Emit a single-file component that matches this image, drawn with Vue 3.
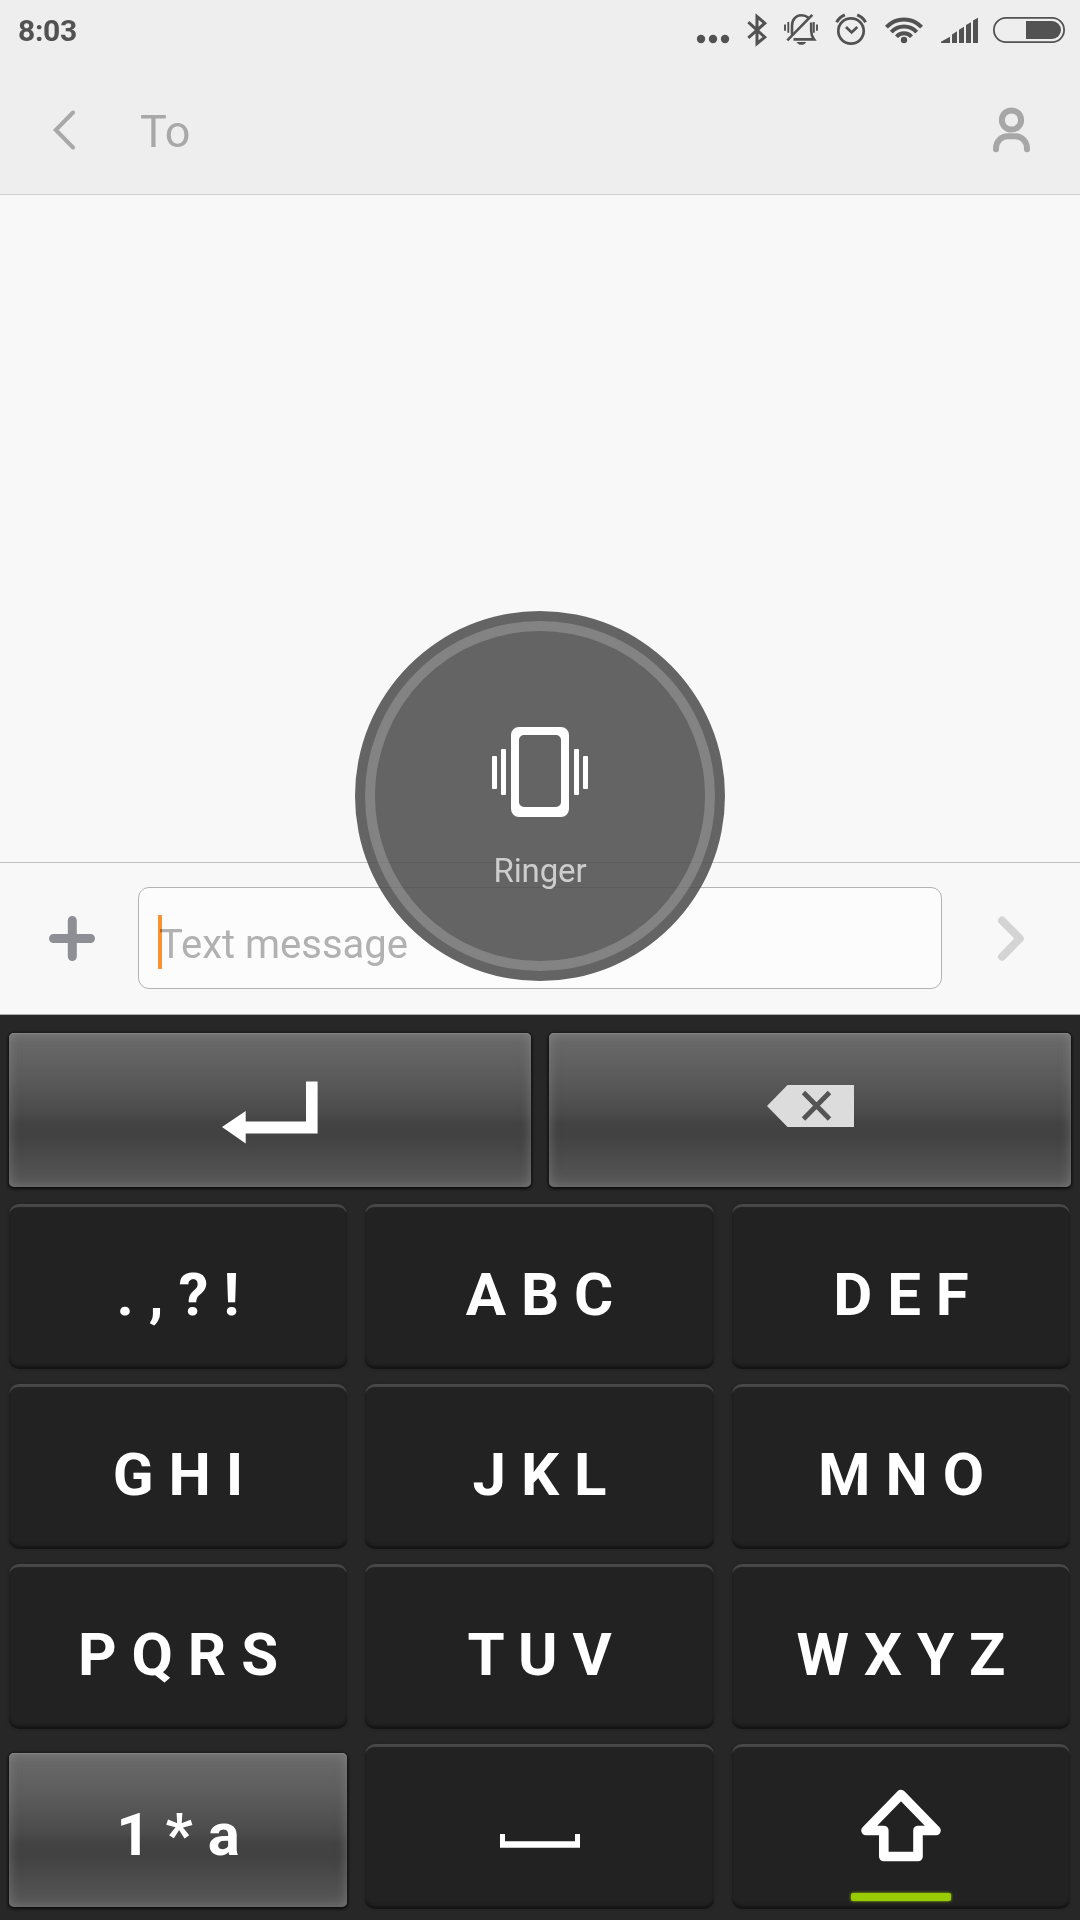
<template>
  <div class="screen">
    <!-- Status bar -->
    <div class="status-bar">
      <span class="clock">8:03</span>
      <svg class="status-icons" width="400" height="60" viewBox="680 0 400 60" fill="none" stroke="#525252">
        <!-- more -->
        <g fill="#525252" stroke="none">
          <circle cx="701" cy="39" r="4.2" />
          <circle cx="713" cy="39" r="4.2" />
          <circle cx="725" cy="39" r="4.2" />
        </g>
        <!-- bluetooth -->
        <path d="M748.3 22.2L764.8 37.2L757 43.5V16.5L764.8 23.2L748.3 37.8" stroke-width="3" />
        <!-- muted bell -->
        <g stroke-width="2.6">
          <path d="M792 34.5V26C792 19.5 796 15.3 801.5 15.3C804.2 15.3 806.6 16.2 808.4 17.8" />
          <path d="M811.2 22.5V31C811.2 35 812.3 37.2 814 39.4H793.5" />
          <path d="M787.3 40.4L812.3 14.8" />
        </g>
        <path d="M796.5 42H806.3C805 44 803.5 44.8 801.4 44.8C799.3 44.8 797.8 44 796.5 42Z" fill="#525252" stroke="none" />
        <path d="M785 24.5V30.7M817 24.5V30.7" stroke-width="1.9" />
        <path d="M788.3 22V32.7M813.8 22V32.7" stroke-width="1.9" />
        <!-- alarm -->
        <circle cx="851" cy="31" r="12.7" stroke-width="2.7" />
        <path d="M846 27L851.6 32.4L857.3 27" stroke-width="2.7" />
        <path d="M836.6 22.2Q839.2 17.3 844.8 14.8M865.6 22.2Q863 17.3 857.2 14.8" stroke-width="3" />
        <!-- wifi -->
        <g stroke-width="4">
          <path d="M886.4 27.2A24 24 0 0 1 921.6 27.2" />
          <path d="M891.3 32.2A17.2 17.2 0 0 1 916.7 32.2" />
          <path d="M896.5 36.7A10 10 0 0 1 911.5 36.7" />
        </g>
        <circle cx="904" cy="40" r="3.2" fill="#525252" stroke="none" />
        <!-- signal -->
        <g fill="#525252" stroke="none">
          <path d="M941 43V41.7L950 36.8V43Z" />
          <path d="M952 43V34.6L957 31.3V43Z" />
          <path d="M959 43V29.8L964 26.7V43Z" />
          <path d="M966 43V25L971 22.3V43Z" />
          <path d="M973 43V20.5L978 17.7V43Z" />
        </g>
        <!-- battery -->
        <rect x="993.9" y="17.9" width="70.2" height="24.2" rx="12.1" stroke-width="1.8" />
        <path d="M1026 21H1052A9 9 0 0 1 1052 39H1026Z" fill="#525252" stroke="none" />
      </svg>
    </div>

    <!-- Recipient -->
    <div class="header">
      <svg class="back" width="24" height="40" viewBox="0 0 24 40">
        <path d="M21 2.5L3.8 20L21 37.5" fill="none" stroke="#a8a8a8" stroke-width="4" stroke-linecap="round" />
      </svg>
      <span class="to">To</span>
      <svg width="40" height="48" viewBox="0 0 40 48" fill="none" stroke="#a7a7a7" stroke-width="6">
        <circle cx="20.5" cy="14" r="9.6" />
        <path d="M5 43.2V42.5C5 35 10.5 30.3 17 30.3H24C30.5 30.3 36 35 36 42.5V43.2" stroke-linecap="round" />
      </svg>
    </div>

    <div class="conversation"></div>

    <!-- Message field -->
    <div class="composer">
      <svg class="plus" width="46" height="46" viewBox="0 0 46 46">
        <path d="M4.5 22.5H41.5M23.3 4.5V40.5" stroke="#8e8f94" stroke-width="9" stroke-linecap="round" />
      </svg>
      <div class="field">
        <span class="placeholder">Text message</span>
        <span class="caret"></span>
      </div>
      <svg class="send" width="28" height="46" viewBox="0 0 28 46">
        <path d="M5 4.5L22.8 22.5L5 40.7" fill="none" stroke="#d4d4d4" stroke-width="8" stroke-linecap="round" stroke-linejoin="round" />
      </svg>
    </div>

    <!-- Keyboard -->
    <div class="keyboard">
      <div class="top-keys">
        <button class="key light">
          <svg width="96" height="64" viewBox="0 0 96 64">
            <path d="M84 0.5H95.6V52.5H23.7V62.5L0 46L23.7 30V40.5H84Z" fill="#fff" />
          </svg>
        </button>
        <button class="key light delete">
          <svg width="88" height="42" viewBox="0 0 88 42">
            <path d="M0 21L20.5 0H87V42H20.5Z" fill="#dcdcdc" />
            <path d="M36.5 7.5L62.5 34M62.5 7.5L36.5 34" stroke="#545454" stroke-width="4.8" />
          </svg>
        </button>
      </div>
      <div class="letter-keys">
        <button v-for="label in letters" :key="label" class="key dark">{{ label }}</button>
        <button class="key light mode">1 * a</button>
        <button class="key dark space">
          <svg width="80" height="14" viewBox="0 0 80 14">
            <path d="M0 0H5V7.3H75V0H80V13.7H0Z" fill="#fff" />
          </svg>
        </button>
        <button class="key dark shift">
          <svg width="80" height="73" viewBox="0 0 80 73">
            <path
              d="M40 5.5L5 41.5H22.8V67.5H57V41.5H75Z"
              fill="none" stroke="#fff" stroke-width="9.6" stroke-linejoin="round"
            />
          </svg>
          <span class="indicator"></span>
        </button>
      </div>
    </div>

    <!-- Ringer overlay -->
    <div class="ringer">
      <svg width="96" height="90" viewBox="0 0 96 90" fill="#fff">
        <rect x="0" y="29" width="5" height="33" rx="1" />
        <rect x="9" y="22" width="5" height="46" rx="1" />
        <path
          fill-rule="evenodd"
          d="M27 0H69A8 8 0 0 1 77 8V82A8 8 0 0 1 69 90H27A8 8 0 0 1 19 82V8A8 8 0 0 1 27 0ZM32 8A5 5 0 0 0 27 13V75A5 5 0 0 0 32 80H64A5 5 0 0 0 69 75V13A5 5 0 0 0 64 8Z"
        />
        <rect x="82" y="22" width="5" height="46" rx="1" />
        <rect x="91" y="29" width="5" height="33" rx="1" />
      </svg>
      <span class="ringer-label">Ringer</span>
    </div>
  </div>
</template>

<script setup>
const letters = ['. , ? !', 'A B C', 'D E F', 'G H I', 'J K L', 'M N O', 'P Q R S', 'T U V', 'W X Y Z'];
</script>

<style>
body {
  margin: 0;
}
</style>

<style scoped>
.screen {
  position: relative;
  display: flex;
  flex-direction: column;
  width: 1080px;
  height: 1920px;
  overflow: hidden;
  background: #f8f8f8;
  font-family: Roboto, sans-serif;
}

.screen svg {
  display: block;
  flex: none;
}

.status-bar {
  display: flex;
  justify-content: space-between;
  height: 60px;
  padding-left: 18px;
  background: #eee;
}

.clock {
  color: #525252;
  font-size: 30px;
  font-weight: 700;
  line-height: 62px;
  letter-spacing: -0.3px;
}

/* Header */
.header {
  display: flex;
  align-items: center;
  box-sizing: border-box;
  height: 135px;
  padding: 6px 49px 0 52px;
  border-bottom: 1px solid #d0d0d0;
  background: #eee;
}

.header .to {
  flex: 1;
  padding: 3px 0 0 64px;
  color: #a8a8a8;
  font-size: 45px;
}

.conversation {
  flex: 1;
}

/* Composer */
.composer {
  display: flex;
  align-items: center;
  box-sizing: border-box;
  height: 153px;
  padding: 0 55px 0 49px;
  border-top: 1px solid #c2c2c2;
  border-bottom: 1px solid #a9acab;
}

.field {
  position: relative;
  flex: 1;
  box-sizing: border-box;
  height: 102px;
  margin: 0 55px 2px 43px;
  padding: 8px 0 0 20px;
  border: 1px solid #b3b3b3;
  border-radius: 11px;
  background: #fcfcfc;
  line-height: 98px;
}

.placeholder {
  color: #b1b1b1;
  font-size: 40px;
}

.caret {
  position: absolute;
  top: 27px;
  left: 19px;
  width: 4px;
  height: 54px;
  background: #ff9432;
  mix-blend-mode: multiply;
}

/* Keyboard */
.keyboard {
  display: flex;
  flex-direction: column;
  gap: 17px;
  box-sizing: border-box;
  height: 905px;
  padding: 18px 9px 0;
  background: #272727;
}

.top-keys {
  display: grid;
  grid-template-columns: 522px 522px;
  gap: 18px;
  height: 154px;
}

.letter-keys {
  display: grid;
  grid-template-columns: 338px 349px 338px;
  grid-auto-rows: 165px;
  gap: 15px 18px;
}

.key {
  position: relative;
  display: flex;
  justify-content: center;
  align-items: center;
  padding: 0;
  border: none;
  color: #fff;
  font-family: inherit;
  font-size: 60px;
  font-weight: 700;
}

.dark {
  padding: 16px 0 0;
  border-radius: 10px;
  background: #222;
  box-shadow: inset 0 4px 1px -1px #484848, inset 0 -4px 3px -1px #141414, 0 0 3px #222;
}

.light {
  border-radius: 5px;
  background: linear-gradient(#6b6b6b, #5c5c5c 27%, #4b4b4b 52%, #434343 58%, #424242 68%, #595959);
  box-shadow: inset 0 0 12px rgba(150, 150, 150, 0.5), inset 0 1px 1px #808080, 0 1px 3px 1px #0c0c0c;
}

.top-keys .light {
  padding-top: 6px;
}

.top-keys .delete {
  padding: 0 0 9px 2px;
}

.letter-keys .mode {
  height: 154px;
  margin-top: 9px;
  padding-top: 9px;
}

.letter-keys .space {
  padding: 29px 0 0;
}

.letter-keys .shift {
  padding: 0 0 3px;
}

.indicator {
  position: absolute;
  bottom: 8px;
  left: 119px;
  width: 100px;
  height: 8px;
  border-radius: 2px;
  background: #9c0;
  box-shadow: 0 0 3px #9c0;
}

/* Ringer overlay */
.ringer {
  position: absolute;
  top: 611px;
  left: 355px;
  display: flex;
  flex-direction: column;
  align-items: center;
  box-sizing: border-box;
  width: 370px;
  height: 370px;
  padding-top: 116px;
  border-radius: 50%;
  background: rgba(79, 79, 79, 0.88);
}

.ringer::before {
  content: '';
  position: absolute;
  inset: 10px;
  border: 10px solid rgba(255, 255, 255, 0.2);
  border-radius: 50%;
}

.ringer-label {
  margin-top: 34px;
  color: #cdcdcd;
  font-size: 33px;
  letter-spacing: -0.1px;
}
</style>
